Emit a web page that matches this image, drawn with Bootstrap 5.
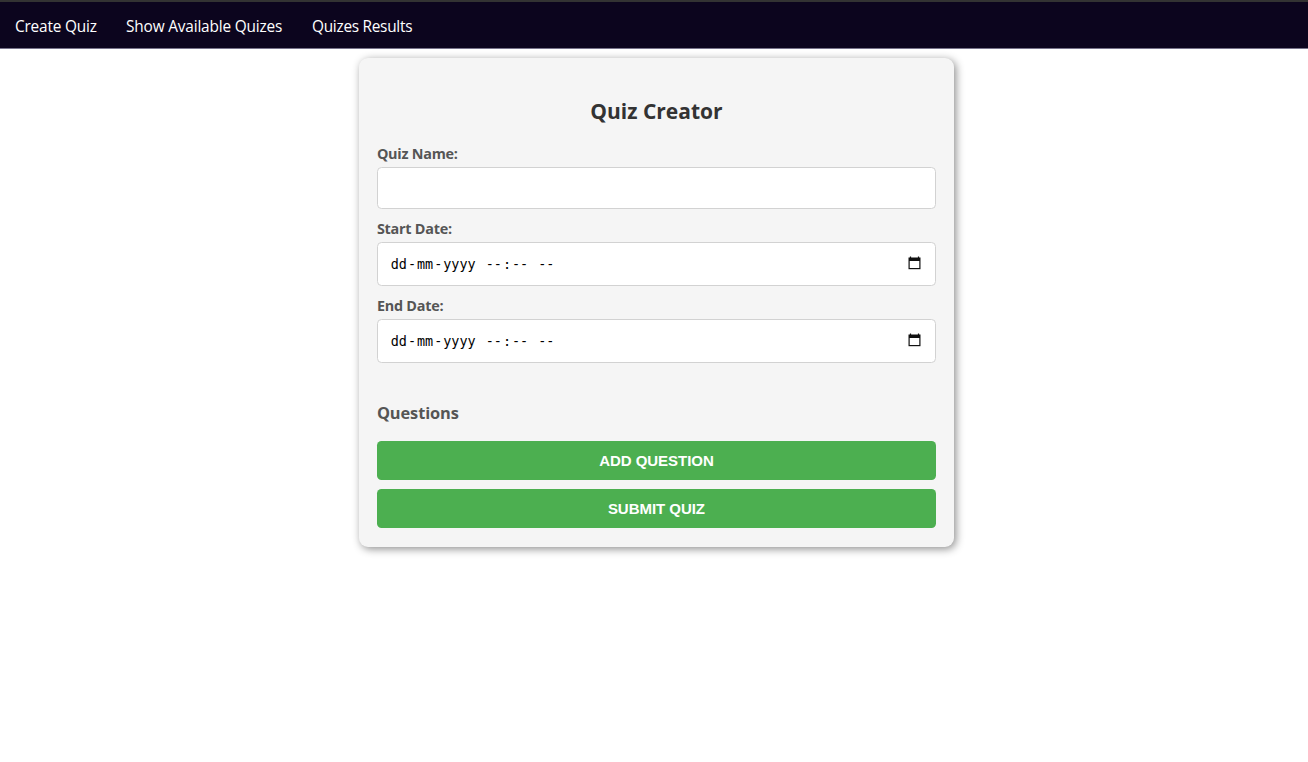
<!DOCTYPE html>
<html lang="en">
<head>
<meta charset="utf-8">
<meta name="viewport" content="width=device-width, initial-scale=1">
<title>Quiz Creator</title>
<link href="https://cdn.jsdelivr.net/npm/bootstrap@5.3.0/dist/css/bootstrap.min.css" rel="stylesheet">
<style>
body { font-family: "Open Sans", "Noto Sans", sans-serif; background: #fff; }
.topbar { height: 49px; background: #0c051e; border-top: 2px solid #333; border-bottom: 1px solid #77738a; padding: 4px 0 0 15px; gap: 29px; }
.topbar .nav-link { color: #fff; padding: 0; font-size: 15.4px; line-height: 24px; white-space: nowrap; }
.l1 { width: 82px; letter-spacing: -.18px; }
.l2 { width: 157px; letter-spacing: -.17px; }
.l3 { width: 101px; letter-spacing: -.28px; }
.quiz { width: 595px; height: 489px; margin: 9px 0 0 359px; padding: 0 18.5px 0 18.4px; background: #f5f5f5; border-radius: 9px; box-shadow: 2px 2px 9px rgba(0,0,0,.45); }
.quiz h1 { font-size: 21px; line-height: 28px; font-weight: 700; color: #333; margin: 0; padding-top: 39px; height: 86px; }
.quiz label, .quiz .lbl { display: block; font-size: 14.4px; line-height: 20px; height: 23.5px; font-weight: 700; color: #555; letter-spacing: -.24px; margin-left: -.5px; }
.quiz .form-control { border: 1px solid #d2d2d2; border-radius: 4.5px; background: #fff; padding: 0 11px 0 11.3px; }
.quiz label { height: 23px; }
.name { height: 41.5px; margin-bottom: 10px; }
.quiz .stamp { height: 44px; margin-bottom: 9.5px; padding-top: 1px; font: 13.45px/20px "DejaVu Sans Mono", monospace; color: #000; white-space: pre; }
.stamp .part { padding: 0 1px; }
.stamp svg { margin: 0 3px 4px 0; }
.quiz .stamp.last { margin-bottom: 9.5px; }
.quiz h2 { font-size: 16.4px; line-height: 24px; font-weight: 700; color: #555; margin: 0 0 0 -.5px; padding-top: 28.5px; height: 68px; letter-spacing: -.1px; }
.quiz .btn { height: 39px; padding: 0; border: 0; border-radius: 4.5px; background: #4caf50; color: #fff; font: bold 15px/37px "Liberation Sans", Arial, sans-serif; letter-spacing: -.04px; margin-bottom: 9.5px; }
</style>
</head>
<body class="min-vh-100">
<nav class="topbar d-flex align-items-center">
  <a class="nav-link l1" href="#">Create Quiz</a>
  <a class="nav-link l2" href="#">Show Available Quizes</a>
  <a class="nav-link l3" href="#">Quizes Results</a>
</nav>
<main class="quiz">
  <h1 class="text-center">Quiz Creator</h1>
  <label for="name">Quiz Name:</label>
  <input id="name" class="form-control name" type="text">
  <div class="lbl">Start Date:</div>
  <div class="form-control stamp d-flex align-items-center"><span class="part">dd</span>-<span class="part">mm</span>-<span class="part">yyyy</span><span> </span><span class="part">--</span>:<span class="part">--</span><span> </span><span class="part">--</span>
    <svg class="ms-auto" width="13" height="14" viewBox="0 0 13 14"><path d="M.5 1.5h12v11.7h-12z" fill="#111"/><path d="M1.7 5h9.6v7H1.7z" fill="#fff"/><path d="M2.5 .5v2M10.5 .5v2" stroke="#111" stroke-width="1.2"/></svg></div>
  <div class="lbl">End Date:</div>
  <div class="form-control stamp last d-flex align-items-center"><span class="part">dd</span>-<span class="part">mm</span>-<span class="part">yyyy</span><span> </span><span class="part">--</span>:<span class="part">--</span><span> </span><span class="part">--</span>
    <svg class="ms-auto" width="13" height="14" viewBox="0 0 13 14"><path d="M.5 1.5h12v11.7h-12z" fill="#111"/><path d="M1.7 5h9.6v7H1.7z" fill="#fff"/><path d="M2.5 .5v2M10.5 .5v2" stroke="#111" stroke-width="1.2"/></svg></div>
  <h2>Questions</h2>
  <button class="btn d-block w-100" type="button">ADD QUESTION</button>
  <button class="btn d-block w-100" type="button">SUBMIT QUIZ</button>
</main>
<script src="https://cdn.jsdelivr.net/npm/bootstrap@5.3.0/dist/js/bootstrap.bundle.min.js"></script>
</body>
</html>
